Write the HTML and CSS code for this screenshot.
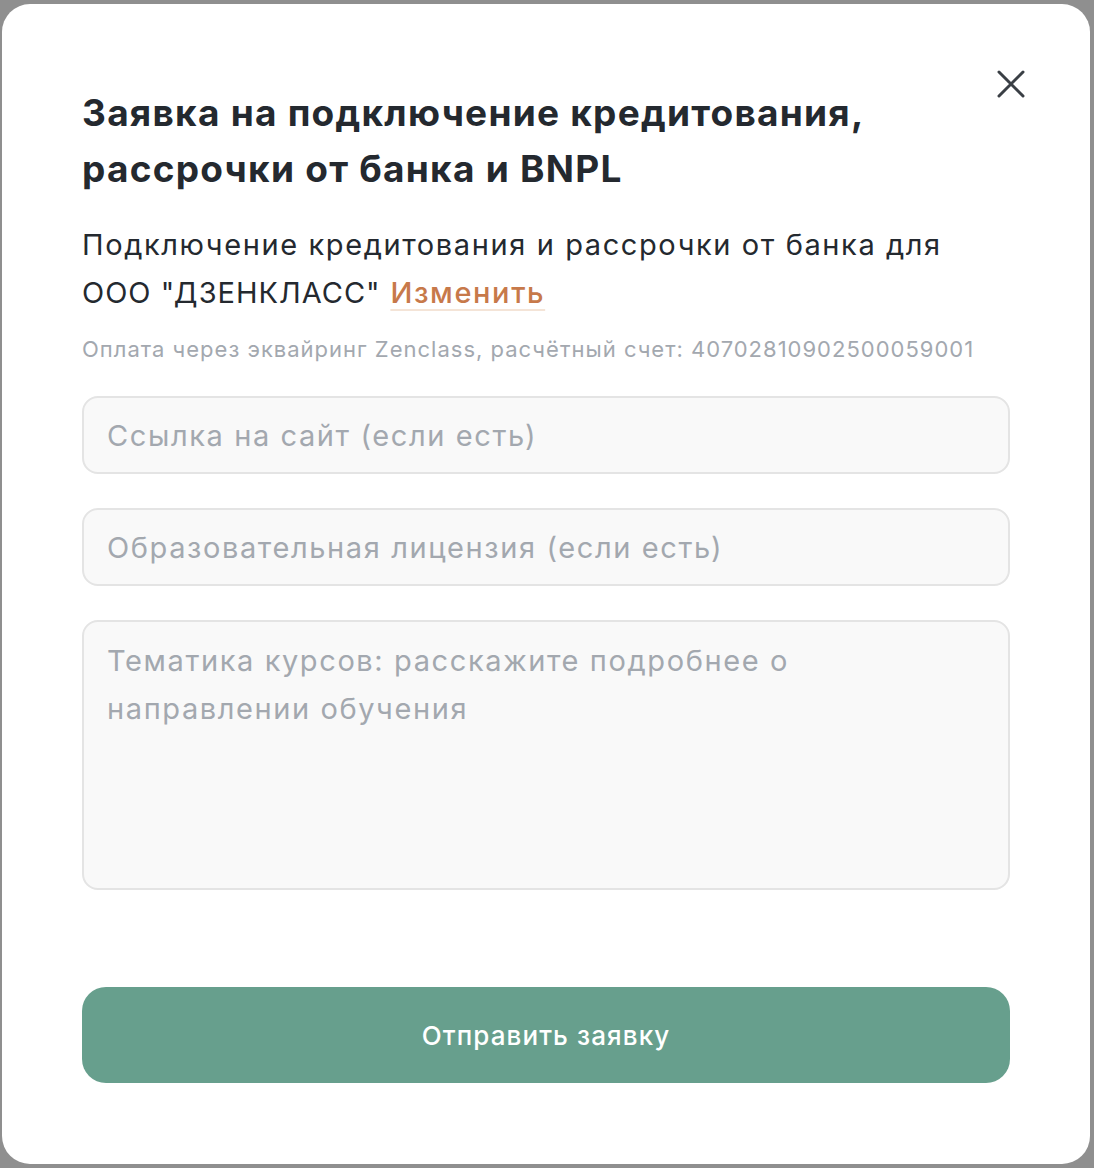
FILE: index.html
```html
<!DOCTYPE html>
<html lang="ru">
<head>
  <meta charset="UTF-8" />
  <meta name="viewport" content="width=device-width, initial-scale=1.0" />
  <title>Заявка на подключение кредитования</title>
  <link rel="stylesheet" href="styles.css">
</head>
<body>
  <div class="backdrop">
    <div class="modal">
      <button class="close" aria-label="Закрыть">
        <svg width="30" height="30" viewBox="0 0 30 30" fill="none" stroke="#3a3f45" stroke-width="3" stroke-linecap="round">
          <path d="M3 3 L27 27 M27 3 L3 27" />
        </svg>
      </button>
      <h1 class="title">Заявка на подключение кредитования, рассрочки от банка и BNPL</h1>
      <p class="lead">Подключение кредитования и рассрочки от банка для <span class="caps">ООО "ДЗЕНКЛАСС"</span> <a class="change" href="#">Изменить</a></p>
      <p class="note">Оплата через эквайринг Zenclass, расчётный счет: 40702810902500059001</p>
      <form class="form">
        <input class="field" type="text" placeholder="Ссылка на сайт (если есть)" />
        <input class="field" type="text" placeholder="Образовательная лицензия (если есть)" />
        <textarea class="field area" placeholder="Тематика курсов: расскажите подробнее о направлении обучения"></textarea>
        <button class="submit" type="button">Отправить заявку</button>
      </form>
    </div>
  </div>
</body>
</html>
```

FILE: styles.css
```css
* { box-sizing: border-box; }
body { margin: 0; background: #8f8f8f; font-family: Inter, "Noto Sans", sans-serif; color: #24292f; }
.backdrop { padding: 4px 4px 4px 2px; }
.modal { position: relative; width: 1088px; height: 1160px; background: #fff; border-radius: 28px; padding: 81px 80px 0 80px; display: flex; flex-direction: column; }
.close { position: absolute; top: 65px; right: 64px; background: none; border: none; padding: 0; cursor: pointer; }
.close svg { display: block; }
.title { margin: 0; font-size: 37px; line-height: 56px; font-weight: 700; letter-spacing: 1.25px; color: #24292f; max-width: 860px; }
.lead { margin: 24px 0 0; font-size: 29px; line-height: 48px; letter-spacing: 1.6px; color: #24292f; }
.caps { letter-spacing: 1px; }
.change { color: #c7794a; font-weight: 500; text-decoration: underline; text-decoration-color: #f4e4d7; text-decoration-thickness: 2px; text-underline-offset: 6px; }
.note { margin: 17px 0 0; font-size: 22px; line-height: 30px; letter-spacing: 1px; color: #a3a8af; }
.form { display: flex; flex-direction: column; margin-top: 32px; flex: 1; }
.field { width: 928px; height: 78px; margin-bottom: 34px; padding: 0 23px; background: #f9f9f9; border: 2px solid #e4e4e4; border-radius: 16px; font-family: inherit; font-size: 29px; letter-spacing: 1.6px; color: #24292f; outline: none; }
.field::placeholder { color: #a3a8af; }
.area { height: 270px; padding: 15px 23px; line-height: 48px; resize: none; }
.submit { margin-top: 63px; width: 928px; height: 96px; border: none; border-radius: 24px; background: #679f8d; color: #fff; font-family: inherit; font-size: 26px; font-weight: 500; letter-spacing: 1.1px; cursor: pointer; }
```
